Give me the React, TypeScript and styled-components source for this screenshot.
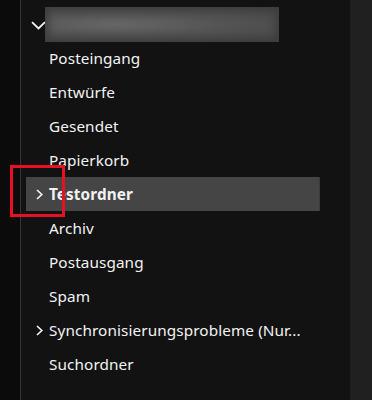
import React from "react";
import styled, { createGlobalStyle } from "styled-components";

const GlobalStyle = createGlobalStyle`
  html, body {
    margin: 0;
    padding: 0;
    background: #121212;
  }
  body {
    font-family: "Noto Sans", "Open Sans", sans-serif;
  }
`;

const Frame = styled.div`
  display: flex;
  width: 372px;
  height: 400px;
  overflow: hidden;
`;

const LeftStrip = styled.div`
  width: 20px;
  background: #0b0b0b;
`;

const Divider = styled.div`
  width: 1px;
  background: #353535;
`;

const Panel = styled.div`
  position: relative;
  flex: 1;
  background: #121212;
  padding: 7px 0 0 5px;
`;

const RightStrip = styled.div`
  width: 22px;
  background: #202020;
`;

const Row = styled.div<{ selected?: boolean }>`
  display: flex;
  align-items: center;
  width: 294px;
  height: 34px;
  box-sizing: border-box;
  background: ${({ selected }) => (selected ? "#454545" : "transparent")};
  border-right: ${({ selected }) => (selected ? "1px solid #3a3a3a" : "none")};
  color: #f2f2f2;
  font-size: 15.3px;
  font-weight: ${({ selected }) => (selected ? 700 : 400)};
`;

const Toggle = styled.div<{ wide?: boolean }>`
  width: 23px;
  flex-shrink: 0;
  display: flex;
  align-items: center;
  justify-content: ${({ wide }) => (wide ? "flex-start" : "flex-end")};
  padding-left: ${({ wide }) => (wide ? "5px" : "0")};
  padding-right: ${({ wide }) => (wide ? "0" : "6px")};
  padding-top: ${({ wide }) => (wide ? "3px" : "0")};
  box-sizing: border-box;
`;

const Label = styled.span`
  white-space: nowrap;
  letter-spacing: 0.1px;
  margin-top: -1px;
`;

const Blurred = styled.div`
  width: 234px;
  height: 35px;
  margin-left: -4px;
  margin-top: 1px;
  background: radial-gradient(ellipse at 30% 50%, #666 0%, #545454 45%, #464646 100%);
  filter: blur(0.5px);
  box-shadow: inset 0 0 8px 3px #3c3c3c;
`;

const Highlight = styled.div`
  position: absolute;
  left: -11px;
  top: 165px;
  width: 55px;
  height: 52px;
  box-sizing: border-box;
  border: 3px solid #e81123;
  pointer-events: none;
`;

const ChevronDown = () => (
  <svg width="15" height="9" viewBox="0 0 15 9">
    <path d="M1 1.2 L7.5 7.5 L14 1.2" fill="none" stroke="#f2f2f2" strokeWidth="1.8" />
  </svg>
);

const ChevronRight = () => (
  <svg width="7" height="11" viewBox="0 0 7 11">
    <path d="M1 1 L5.8 5.5 L1 10" fill="none" stroke="#f2f2f2" strokeWidth="1.7" />
  </svg>
);

type Folder = { name: string; hasChildren?: boolean; selected?: boolean };

const folders: Folder[] = [
  { name: "Posteingang" },
  { name: "Entwürfe" },
  { name: "Gesendet" },
  { name: "Papierkorb" },
  { name: "Testordner", hasChildren: true, selected: true },
  { name: "Archiv" },
  { name: "Postausgang" },
  { name: "Spam" },
  { name: "Synchronisierungsprobleme (Nur...", hasChildren: true },
  { name: "Suchordner" },
];

const App: React.FC = () => {
  return (
    <>
      <GlobalStyle />
      <Frame>
        <LeftStrip />
        <Divider />
        <Panel>
          <Row>
            <Toggle wide>
              <ChevronDown />
            </Toggle>
            <Blurred />
          </Row>
          {folders.map((f) => (
            <Row key={f.name} selected={f.selected}>
              <Toggle>{f.hasChildren && <ChevronRight />}</Toggle>
              <Label>{f.name}</Label>
            </Row>
          ))}
          <Highlight />
        </Panel>
        <RightStrip />
      </Frame>
    </>
  );
};

export default App;
